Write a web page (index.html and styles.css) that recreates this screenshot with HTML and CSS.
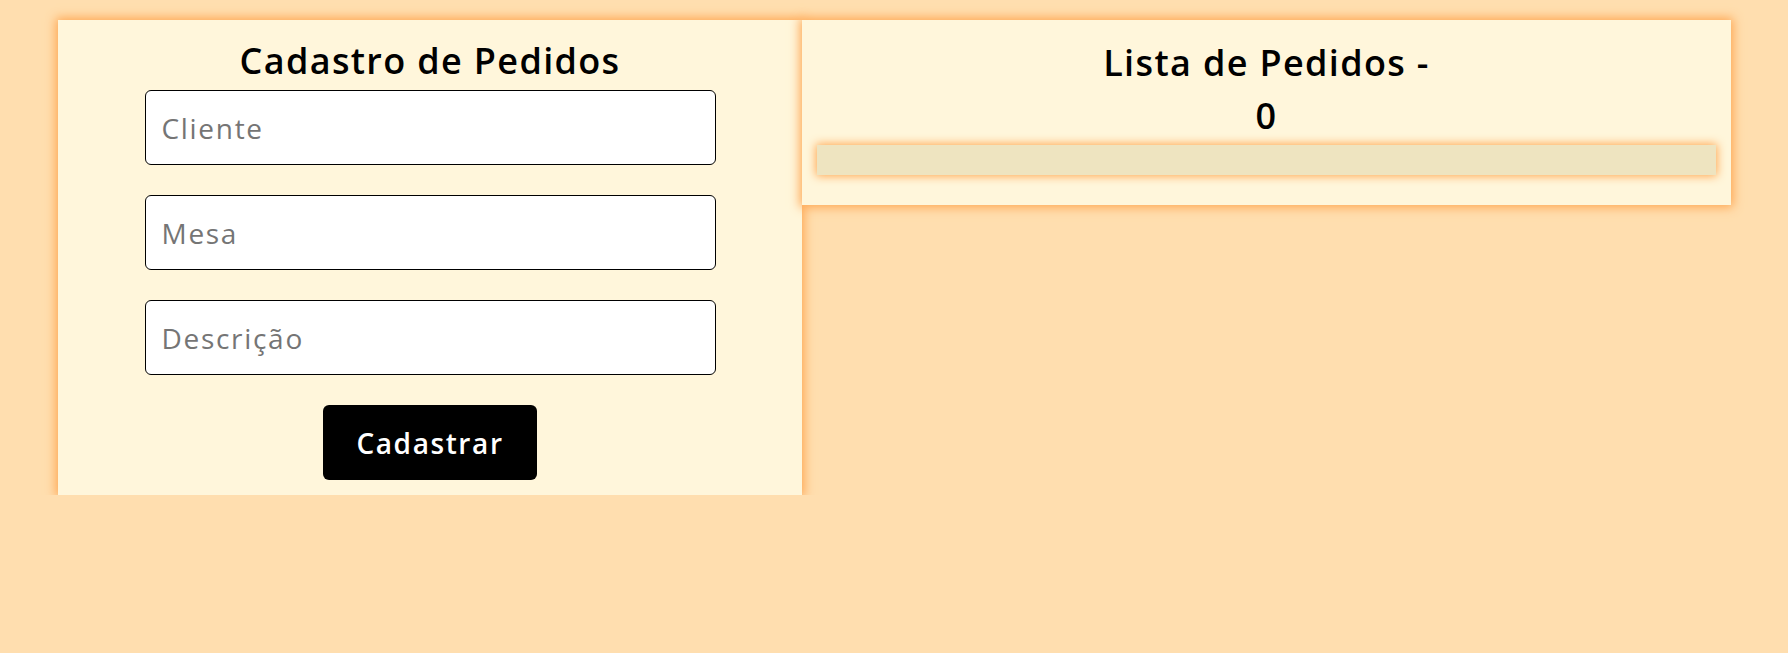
FILE: index.html
```html
<!DOCTYPE html>
<html lang="pt-BR">
<head>
<meta charset="utf-8">
<title>Pedidos</title>
<link rel="stylesheet" href="styles.css">
</head>
<body>
<main class="layout">
  <section class="card card-form">
    <h1 class="card-title">Cadastro de Pedidos</h1>
    <form class="order-form">
      <input class="field" type="text" placeholder="Cliente">
      <input class="field" type="text" placeholder="Mesa">
      <input class="field" type="text" placeholder="Descrição">
      <button class="btn" type="button">Cadastrar</button>
    </form>
  </section>
  <section class="card card-list">
    <h1 class="card-title list-title">Lista de Pedidos -<span class="count">0</span></h1>
    <div class="list-box"></div>
  </section>
</main>
</body>
</html>
```

FILE: styles.css
```css
* { box-sizing: border-box; }

html, body {
  margin: 0;
  background: #ffdeaf;
  font-family: "Open Sans", "Liberation Sans", sans-serif;
}

.layout {
  display: grid;
  grid-template-columns: 744fr 929fr;
  align-items: start;
  padding: 20px 57px 0 58px;
}

.card {
  background: #fff6db;
  box-shadow: 0 0 10px 2px #ffa54f;
}

.card-form {
  display: flex;
  flex-direction: column;
  align-items: center;
  padding: 14px 0 15px;
}

.card-title {
  margin: 0;
  font-size: 36px;
  line-height: 53px;
  font-weight: 600;
  letter-spacing: 1.35px;
  color: #000;
  text-align: center;
}

.order-form {
  margin-top: 3px;
  display: flex;
  flex-direction: column;
  align-items: center;
  gap: 30px;
}

.field {
  width: 571px;
  height: 75px;
  border: 1px solid #000;
  border-radius: 6px;
  background: #fff;
  padding: 0 16px;
  font-family: inherit;
  font-size: 28px;
  letter-spacing: 1.7px;
  color: #000;
  outline: none;
}

.field::placeholder {
  color: #757575;
}

.btn {
  width: 214px;
  height: 75px;
  border: 0;
  border-radius: 6px;
  background: #000;
  color: #fff;
  font-family: inherit;
  font-size: 28px;
  font-weight: 600;
  letter-spacing: 1.6px;
  cursor: pointer;
}

.card-list {
  padding: 16px 15px 30px;
}

.count {
  display: block;
}

.list-box {
  margin-top: 3px;
  height: 30px;
  background: #eee4c0;
  box-shadow: 0 0 10px 1px #ffa54f;
}
```
